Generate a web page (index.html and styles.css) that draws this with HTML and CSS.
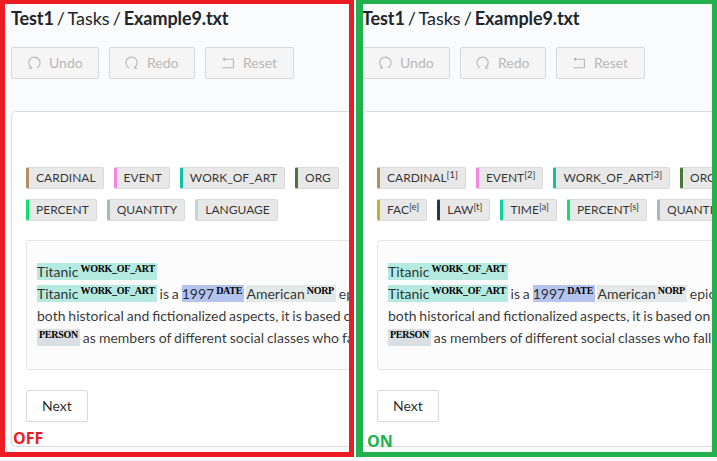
FILE: index.html
```html
<!DOCTYPE html>
<html lang="en">
<head>
<meta charset="utf-8">
<title>Example9.txt</title>
<link rel="stylesheet" href="styles.css">
</head>
<body>
<svg width="0" height="0" class="defs">
  <symbol id="undo" viewBox="0 0 14 14"><path d="M4.1 12.3V11.2A5.6 5.6 0 1 1 9.9 11.7M1.8 12.3H4.1V10" fill="none" stroke="currentColor" stroke-width="1.1"/></symbol>
  <symbol id="reset" viewBox="0 0 14 14"><path d="M2 3.3H12.4V11.8H1.5" fill="none" stroke="currentColor" stroke-width="1.1"/><path d="M1.2 3.3L4 1.3V5.3Z" fill="currentColor"/></symbol>
</svg>
<main class="compare">
  <section class="panel off">
    <div class="page">
      <h1><b>Test1</b> / Tasks / <b>Example9.txt</b></h1>
      <div class="toolbar">
        <button class="btn undo" disabled><svg><use href="#undo"/></svg>Undo</button>
        <button class="btn redo" disabled><svg class="flip"><use href="#undo"/></svg>Redo</button>
        <button class="btn reset" disabled><svg><use href="#reset"/></svg>Reset</button>
      </div>
      <div class="card">
        <div class="tags">
          <div class="row"><span class="tag cardinal">CARDINAL</span><span class="tag event">EVENT</span><span class="tag work">WORK_OF_ART</span><span class="tag org">ORG</span></div>
          <div class="row"><span class="tag percent">PERCENT</span><span class="tag quantity">QUANTITY</span><span class="tag language">LANGUAGE</span></div>
        </div>
        <div class="text">
          <p><mark class="m-work">Titanic<sup>WORK_OF_ART</sup></mark></p>
          <p><mark class="m-work">Titanic<sup>WORK_OF_ART</sup></mark> is a <mark class="m-date">1997<sup>DATE</sup></mark> <mark class="m-norp">American<sup>NORP</sup></mark> epic</p>
          <p>both historical and fictionalized aspects, it is based on</p>
          <p class="loose"><mark class="m-person"><sup>PERSON</sup></mark> as members of different social classes who fall</p>
        </div>
        <button class="btn next">Next</button>
      </div>
    </div>
    <strong class="caption">OFF</strong>
  </section>
  <section class="panel on">
    <div class="page">
      <h1><b>Test1</b> / Tasks / <b>Example9.txt</b></h1>
      <div class="toolbar">
        <button class="btn undo" disabled><svg><use href="#undo"/></svg>Undo</button>
        <button class="btn redo" disabled><svg class="flip"><use href="#undo"/></svg>Redo</button>
        <button class="btn reset" disabled><svg><use href="#reset"/></svg>Reset</button>
      </div>
      <div class="card">
        <div class="tags">
          <div class="row"><span class="tag cardinal">CARDINAL<sup>[1]</sup></span><span class="tag event">EVENT<sup>[2]</sup></span><span class="tag work">WORK_OF_ART<sup>[3]</sup></span><span class="tag org">ORG</span></div>
          <div class="row"><span class="tag fac">FAC<sup>[e]</sup></span><span class="tag law">LAW<sup>[t]</sup></span><span class="tag time">TIME<sup>[a]</sup></span><span class="tag percent">PERCENT<sup>[s]</sup></span><span class="tag quantity">QUANTITY</span></div>
        </div>
        <div class="text">
          <p><mark class="m-work">Titanic<sup>WORK_OF_ART</sup></mark></p>
          <p><mark class="m-work">Titanic<sup>WORK_OF_ART</sup></mark> is a <mark class="m-date">1997<sup>DATE</sup></mark> <mark class="m-norp">American<sup>NORP</sup></mark> epic</p>
          <p>both historical and fictionalized aspects, it is based on</p>
          <p class="loose"><mark class="m-person"><sup>PERSON</sup></mark> as members of different social classes who fall</p>
        </div>
        <button class="btn next">Next</button>
      </div>
    </div>
    <strong class="caption">ON</strong>
  </section>
</main>
</body>
</html>
```
FILE: styles.css
```css
* { box-sizing: border-box; }
body { margin: 0; height: 461px; overflow: hidden; background: #fafbfd; font: 14px/22px Lato, sans-serif; color: rgba(0,0,0,.8); }
.defs { position: absolute; }
.compare { display: flex; gap: 2px; width: 717px; height: 457px; background: #fff; }
.panel { position: relative; height: 457px; overflow: hidden; border: 5px solid; border-top-width: 4px; background: #fafbfd; }
.off { width: 354px; border-color: #ed1c24; }
.on { width: 361px; border-color: #22b14c; border-left-width: 7px; }
.page { width: 900px; padding-left: 6px; }
.on .page { padding-left: 0; margin-left: -1px; }
h1 { margin: 0; height: 28px; font-size: 18px; line-height: 28px; font-weight: 400; color: #212529; white-space: nowrap; word-spacing: -1.6px; }
h1 b { font-weight: 700; letter-spacing: -.1px; }
.toolbar { display: flex; gap: 10px; margin-top: 15px; }
.btn { display: flex; align-items: center; height: 32px; margin: 0; padding: 0 15px; border: 1px solid #d9d9d9; border-radius: 2px; background: #fff; font: 14px/22px Lato, sans-serif; color: rgba(0,0,0,.85); box-shadow: 0 2px 0 rgba(0,0,0,.016); }
.btn:disabled { background: #f5f5f5; color: #b8b8b8; box-shadow: none; }
.btn svg { width: 14px; height: 14px; margin-right: 8px; }
.flip { transform: scaleX(-1); }
.undo { width: 88px; }
.redo { width: 86px; }
.reset { width: 89px; }
.card { height: 336px; margin-top: 32px; padding: 55px 14px 0; border: 1px solid #dadcdf; border-radius: 5px; background: #fff; }
.tags { display: flex; flex-direction: column; gap: 10px; }
.row { display: flex; gap: 10px; }
.tag { height: 22px; padding: 0 7px; border: 1px solid #d9d9d9; border-left: 3px solid; border-radius: 2px; background: #e8e8e8; font-size: 12px; line-height: 20px; white-space: nowrap; }
.tag sup { position: relative; top: -4px; vertical-align: baseline; font-size: 9.5px; line-height: 0; }
.cardinal { border-left-color: #b08e6a; }
.event { border-left-color: #f684e0; }
.work { border-left-color: #12bfa8; }
.org { border-left-color: #4b7539; }
.percent { border-left-color: #0dde6c; }
.quantity { border-left-color: #a2b9c1; }
.language { border-left-color: #bddad0; }
.fac { border-left-color: #bfae37; }
.law { border-left-color: #223b3d; }
.time { border-left-color: #08d59b; }
.text { height: 130px; margin-top: 19px; padding: 20px 10px; border: 1px solid #e6e6e6; border-radius: 3px; background: #fcfcfc; }
.text p { height: 22px; margin: 0; white-space: pre; word-spacing: -.75px; }
.text .loose { word-spacing: -.6px; }
mark { color: inherit; }
mark sup { position: relative; top: -5px; padding: 0 2px; vertical-align: baseline; font: bold 10px/0 "Liberation Serif", serif; letter-spacing: -.28px; color: #000; }
.m-work { background: #b5eae1; }
.m-date { background: #b5c4ef; }
.m-norp { background: #e3e9e8; }
.m-person { background: #d9dfe3; }
.next { margin-top: 20px; }
.caption { position: absolute; font: bold 16px/20px "Open Sans", sans-serif; }
.off .caption { left: 8px; top: 424px; color: #ed1c24; }
.on .caption { left: 4px; top: 427px; color: #22b14c; }
```
